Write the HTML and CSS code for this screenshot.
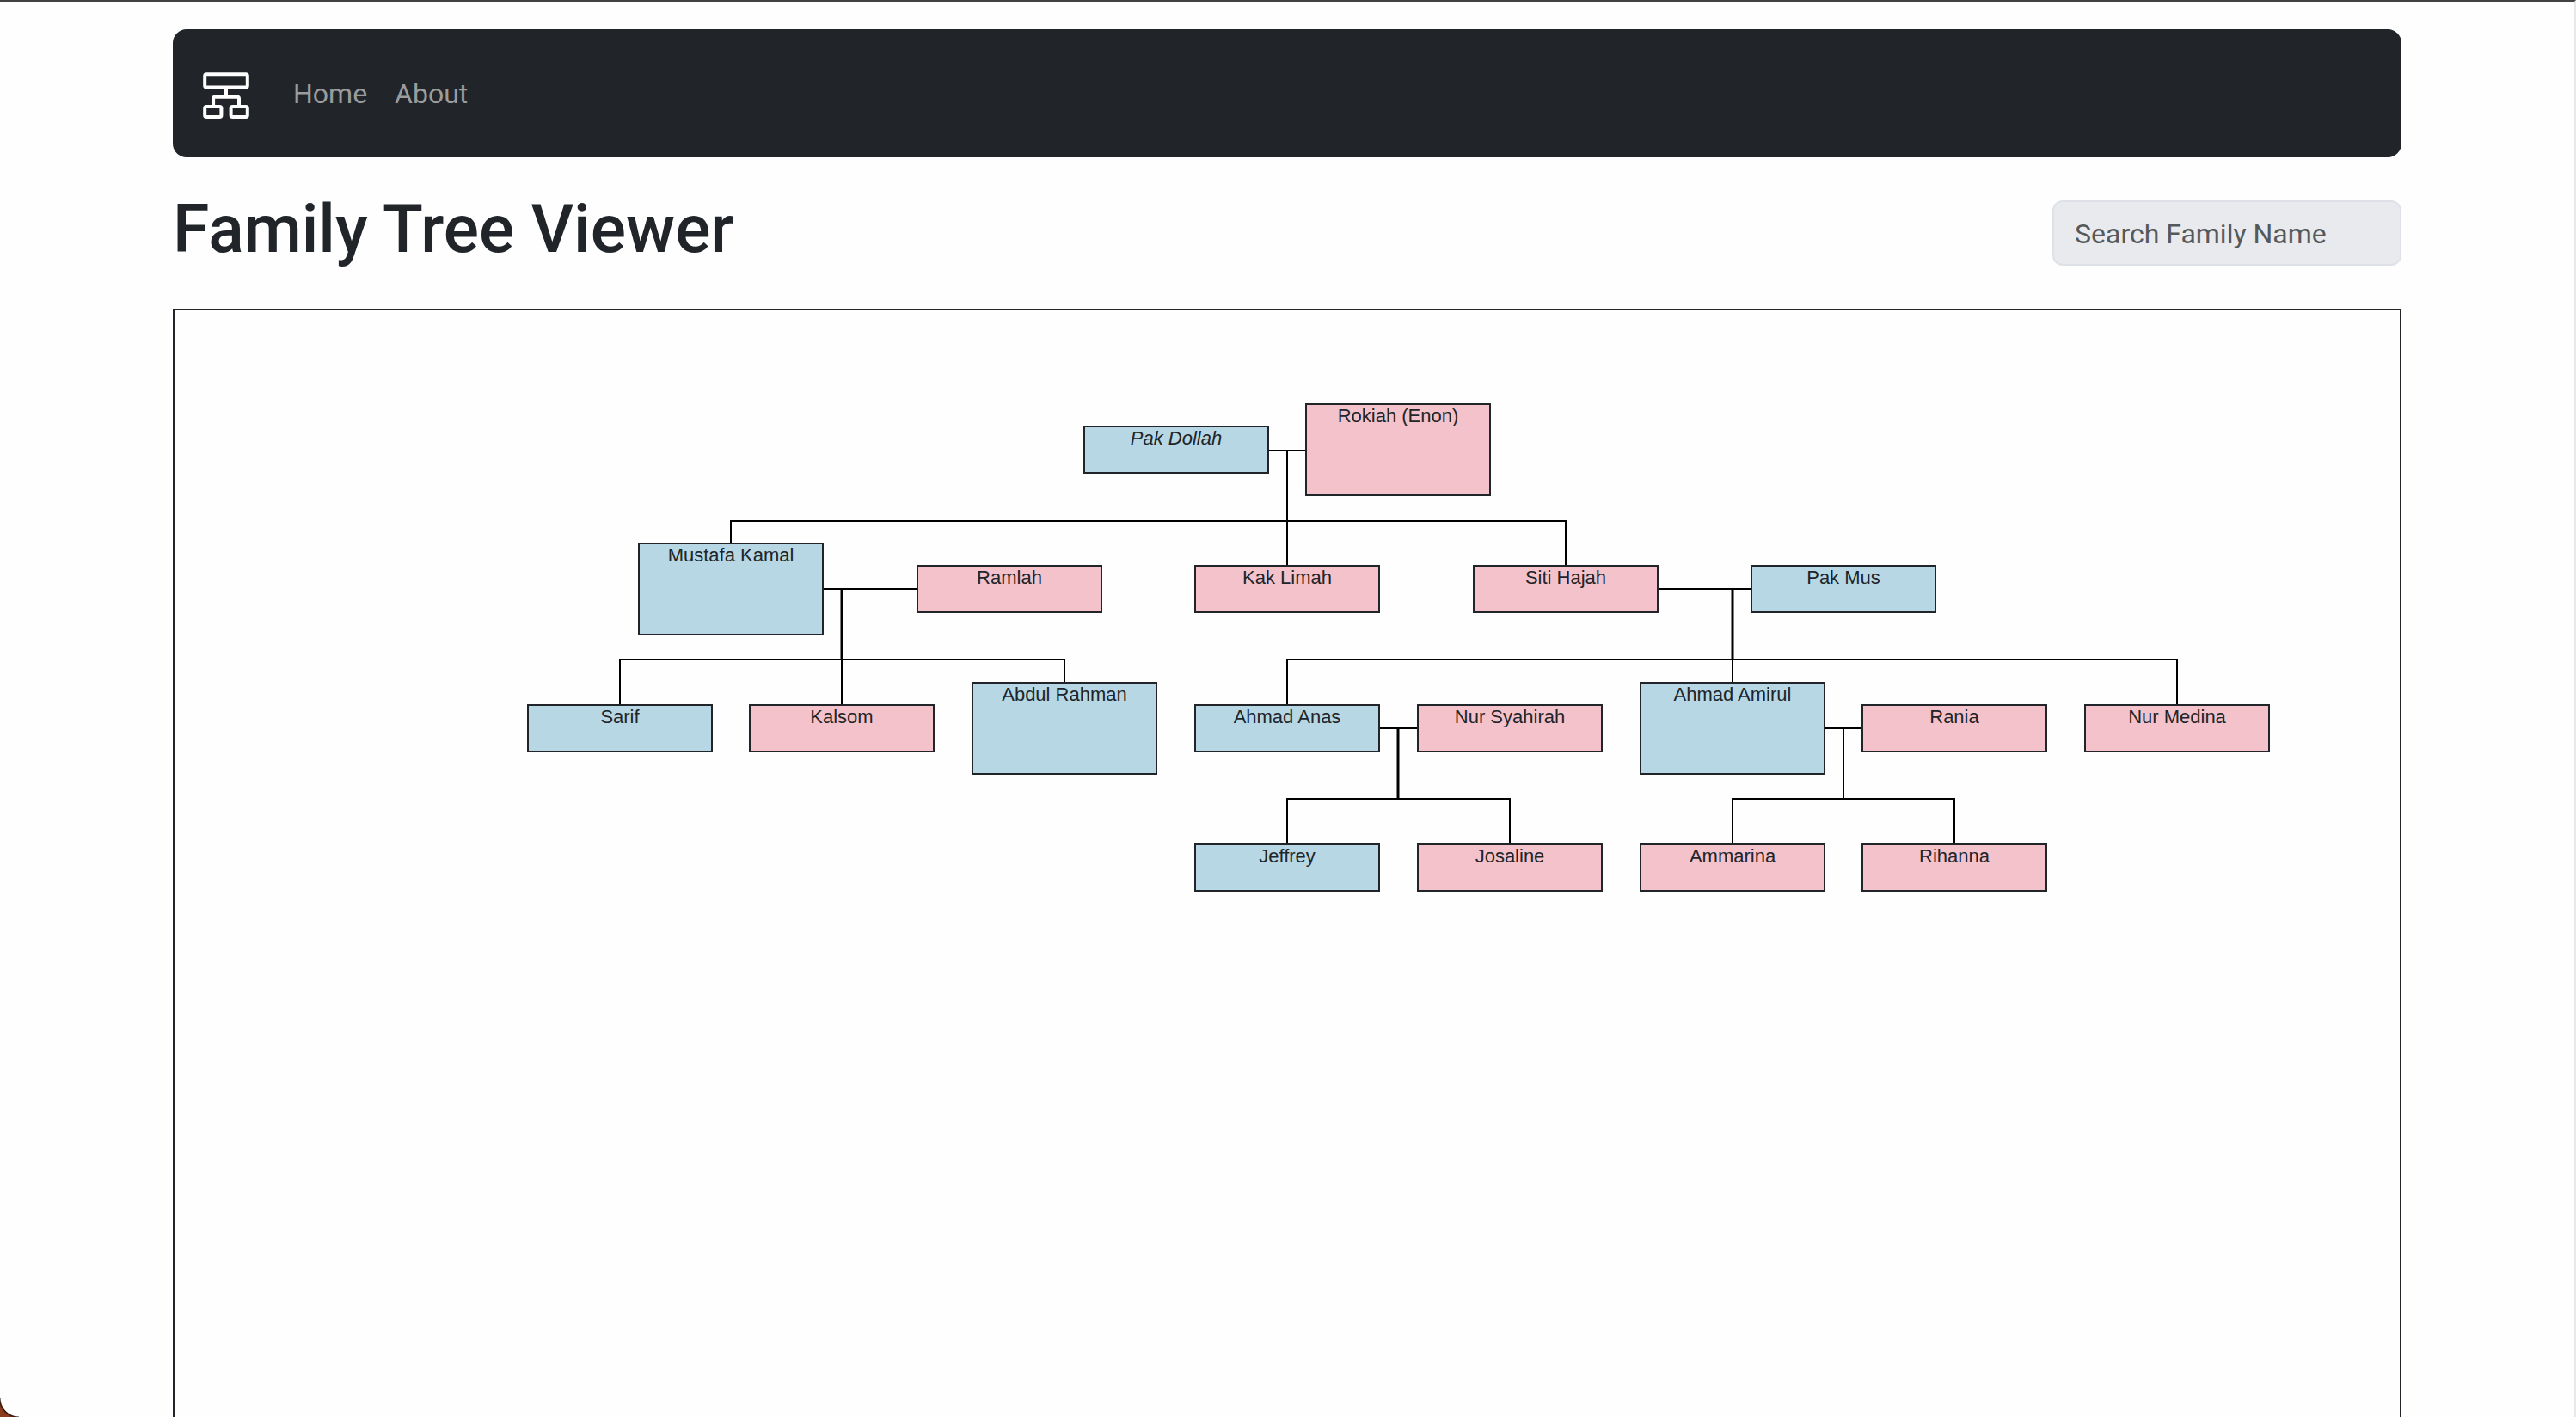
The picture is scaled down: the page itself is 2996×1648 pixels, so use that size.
FILE: index.html
```html
<!DOCTYPE html>
<html lang="en">
<head>
<meta charset="utf-8">
<meta name="viewport" content="width=device-width, initial-scale=1">
<title>Family Tree Viewer</title>
<link rel="stylesheet" href="styles.css">
</head>
<body>
<div class="container">
  <nav class="navbar" aria-label="Main">
    <a class="brand" href="#" aria-label="Family tree home">
      <svg class="brand-icon" viewBox="0 0 64 64" aria-hidden="true">
        <rect x="5.2" y="10.2" width="49.6" height="15.4" rx="2"/>
        <path d="M30 25.6V36.8M15.1 48V38.8a2 2 0 0 1 2-2H43a2 2 0 0 1 2 2V48"/>
        <rect x="5.2" y="48" width="19.2" height="12" rx="2"/>
        <rect x="35.6" y="48" width="19.2" height="12" rx="2"/>
      </svg>
    </a>
    <a class="nav-link" href="#">Home</a>
    <a class="nav-link" href="#about">About</a>
  </nav>

  <header class="page-header">
    <h1 class="title">Family Tree Viewer</h1>
    <input class="search" type="text" placeholder="Search Family Name" aria-label="Search Family Name">
  </header>

  <main class="tree-frame">
    <svg class="tree" viewBox="0 -1 2588 1200" role="img" aria-label="Family tree">
      <g class="links">
        <!-- first couple and their children -->
        <path d="M1272 162H1316M1294 162V296M647 270V244H1618V296"/>
        <!-- second generation -->
        <path d="M754 323H864M518 458V405H1035V432M776 405V458"/>
        <path d="M1725 323H1834M1294 458V405H2329V458M1812 405V432"/>
        <path class="stem" d="M776 323V405M1812 323V405"/>
        <!-- third generation -->
        <path d="M1401 485H1446M1294 620V567H1553V620"/>
        <path d="M1919 485H1963M1812 620V567H2070V620M1941 485V567"/>
        <path class="stem" d="M1423 485V567"/>
      </g>

      <g class="person male"><rect x="1058" y="134" width="214" height="54"/><text class="root-name" x="1165" y="155">Pak Dollah</text></g>
      <g class="person female"><rect x="1316" y="108" width="214" height="106"/><text x="1423" y="129">Rokiah (Enon)</text></g>

      <g class="person male"><rect x="540" y="270" width="214" height="106"/><text x="647" y="291">Mustafa Kamal</text></g>
      <g class="person female"><rect x="864" y="296" width="214" height="54"/><text x="971" y="317">Ramlah</text></g>
      <g class="person female"><rect x="1187" y="296" width="214" height="54"/><text x="1294" y="317">Kak Limah</text></g>
      <g class="person female"><rect x="1511" y="296" width="214" height="54"/><text x="1618" y="317">Siti Hajah</text></g>
      <g class="person male"><rect x="1834" y="296" width="214" height="54"/><text x="1941" y="317">Pak Mus</text></g>

      <g class="person male"><rect x="411" y="458" width="214" height="54"/><text x="518" y="479">Sarif</text></g>
      <g class="person female"><rect x="669" y="458" width="214" height="54"/><text x="776" y="479">Kalsom</text></g>
      <g class="person male"><rect x="928" y="432" width="214" height="106"/><text x="1035" y="453">Abdul Rahman</text></g>
      <g class="person male"><rect x="1187" y="458" width="214" height="54"/><text x="1294" y="479">Ahmad Anas</text></g>
      <g class="person female"><rect x="1446" y="458" width="214" height="54"/><text x="1553" y="479">Nur Syahirah</text></g>
      <g class="person male"><rect x="1705" y="432" width="214" height="106"/><text x="1812" y="453">Ahmad Amirul</text></g>
      <g class="person female"><rect x="1963" y="458" width="214" height="54"/><text x="2070" y="479">Rania</text></g>
      <g class="person female"><rect x="2222" y="458" width="214" height="54"/><text x="2329" y="479">Nur Medina</text></g>

      <g class="person male"><rect x="1187" y="620" width="214" height="54"/><text x="1294" y="641">Jeffrey</text></g>
      <g class="person female"><rect x="1446" y="620" width="214" height="54"/><text x="1553" y="641">Josaline</text></g>
      <g class="person female"><rect x="1705" y="620" width="214" height="54"/><text x="1812" y="641">Ammarina</text></g>
      <g class="person female"><rect x="1963" y="620" width="214" height="54"/><text x="2070" y="641">Rihanna</text></g>
    </svg>
  </main>
</div>
<div class="window-corner"></div>
</body>
</html>
```

FILE: styles.css
```css
* {
  box-sizing: border-box;
}

body {
  margin: 0;
  min-height: 100vh;
  display: flex;
  flex-direction: column;
  background: #fefefe;
  border-top: 2px solid #434142;
  border-right: 2px solid #e8e8e8;
  color: #212529;
  font-family: Roboto, "Liberation Sans", sans-serif;
  font-size: 32px;
  line-height: 48px;
}

.container {
  flex: 1;
  display: flex;
  flex-direction: column;
  width: 100%;
  max-width: 2640px;
  margin: 0 auto;
  padding: 32px 24px 0;
}

.navbar {
  display: flex;
  align-items: center;
  padding: 42px 32px 43px;
  border-radius: 16px;
  background: #212529;
}

.brand {
  display: flex;
  margin-right: 28px;
}

.brand-icon {
  width: 64px;
  height: 64px;
  fill: none;
  stroke: #fff;
  stroke-width: 4;
}

.nav-link {
  padding: 2px 16px 0;
  color: #9b9c9e;
  text-decoration: none;
}

.page-header {
  display: flex;
  justify-content: space-between;
  align-items: flex-start;
  padding: 32px 0 40px;
}

.title {
  margin: 0;
  font-size: 77px;
  font-weight: 500;
  line-height: 104px;
}

.search {
  width: 406px;
  height: 76px;
  margin-top: 18px;
  padding: 2px 24px 0;
  border: 2px solid #dee1e7;
  border-radius: 12px;
  background: #e9eaee;
  color: #212529;
  font: inherit;
}

.search::placeholder {
  color: #55595c;
  opacity: 1;
}

.tree-frame {
  flex: 1;
  border: 2px solid #212529;
  border-bottom: 0;
}

.tree {
  display: block;
  width: 100%;
}

.links path {
  fill: none;
  stroke: #000;
  stroke-width: 2;
}

.links .stem {
  stroke-width: 3;
}

.person rect {
  stroke: #212529;
  stroke-width: 2;
}

.male rect {
  fill: #b6d7e3;
}

.female rect {
  fill: #f4c2cb;
}

.person text {
  fill: #212529;
  font-family: "Liberation Sans", Arial, sans-serif;
  font-size: 22px;
  text-anchor: middle;
}

.person .root-name {
  font-style: italic;
}

/* rounded window corner with the desktop behind it */
.window-corner {
  position: fixed;
  left: 0;
  bottom: 0;
  width: 22px;
  height: 22px;
  background: radial-gradient(circle at 100% 0, transparent 21px, #2a0f06 22px, #8c3c1e 24px);
}
```
